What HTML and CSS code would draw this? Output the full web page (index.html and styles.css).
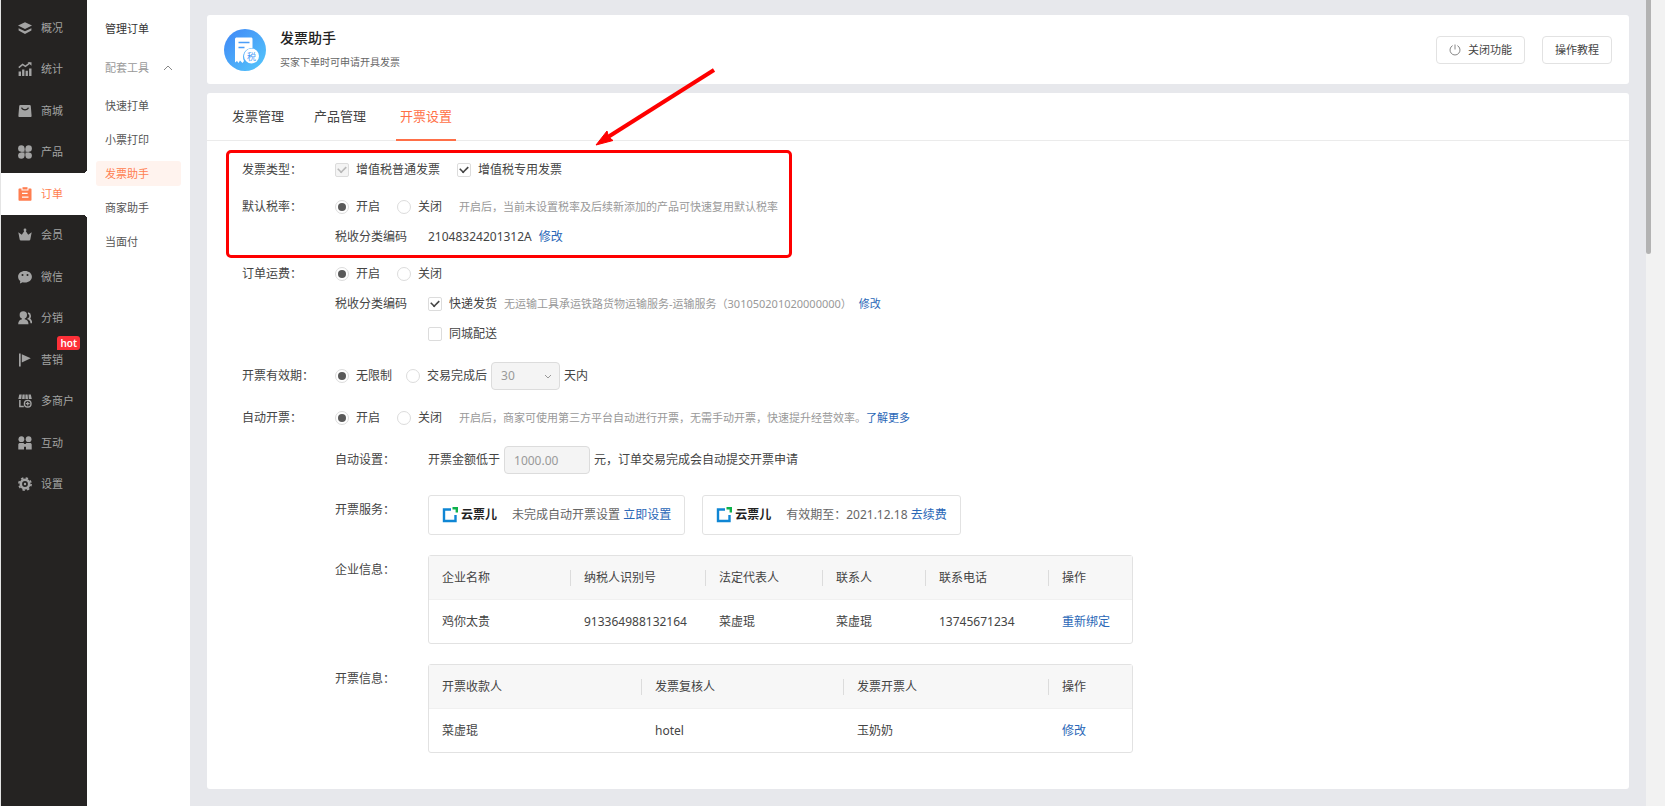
FILE: index.html
```html
<!DOCTYPE html>
<html lang="zh-CN">
<head>
<meta charset="utf-8">
<title>发票助手</title>
<link rel="stylesheet" href="styles.css">
</head>
<body>
<div class="app">
  <nav class="sidebar" aria-label="主菜单">
    <ul class="side-list">
      <li><a class="side-item" href="#"><svg class="side-icon" viewBox="0 0 14 14"><path d="M7 1.200 14 4.600 7 8 0 4.600z"/><path d="M.6 7.200 7 10.300l6.400-3.100v2.200L7 13 .6 9.400z"/></svg>概况</a></li>
      <li><a class="side-item" href="#"><svg class="side-icon" viewBox="0 0 14 14"><path d="M.8 5.600 4.600 2.400l2.800 1.900L12 .9" fill="none" stroke="currentColor" stroke-width="1.600"/><path d="M9.500.2H13.500v3.600zM.6 9.500h2.400V14H.6zM4.100 7.500h2.300V14H4.100zM7.600 8.700h2.300V14H7.600zM11.100 6.500h2.400V14h-2.400z"/></svg>统计</a></li>
      <li><a class="side-item" href="#"><svg class="side-icon" viewBox="0 0 14 14"><path fill-rule="evenodd" d="M2.300 1h9.400c.6 0 1 .4 1.100 1l.8 9.800c.1.800-.4 1.200-1.100 1.200h-11C.8 13 .3 12.600.4 11.800L1.200 2c.1-.6.500-1 1.100-1zM3 3.700C4.200 7.400 9.800 7.400 11 3.700l-1.200-.2C8.900 5.700 5.100 5.700 4.200 3.500z"/></svg>商城</a></li>
      <li><a class="side-item" href="#"><svg class="side-icon" viewBox="0 0 14 14"><circle cx="3.300" cy="3.500" r="3.200"/><circle cx="10.700" cy="3.500" r="3.200"/><circle cx="3.300" cy="10.600" r="3.200"/><circle cx="10.700" cy="10.600" r="3.200"/><path d="M3.300 3.500h3.200v3.200H3.300zM7.500 3.500h3.200v3.200H7.500zM3.300 7.500h3.200v3.100H3.300zM7.500 7.500h3.200v3.100H7.500z"/></svg>产品</a></li>
      <li><a class="side-item active" href="#" aria-current="page"><svg class="side-icon" viewBox="0 0 14 14"><path fill-rule="evenodd" d="M1.500 1.600h2v1.900h7V1.600h2c.6 0 1 .4 1 1v10.200c0 .6-.4 1-1 1h-11c-.6 0-1-.4-1-1V2.600c0-.6.400-1 1-1zM4 5.700v1.200h5.600V5.700zM4 9.500v1.200h6.500V9.500z"/><path d="M4.500.2h5v2.300h-5z"/></svg>订单</a></li>
      <li><a class="side-item" href="#"><svg class="side-icon" viewBox="0 0 14 14"><circle cx="7" cy="1.900" r="1.400"/><path d="M.3 4.200 3.800 6.800 6.300 3h1.400l2.500 3.800 3.500-2.600-1.400 7.300c-.1.700-.5 1-1.200 1H2.900c-.7 0-1.100-.3-1.200-1z"/></svg>会员</a></li>
      <li><a class="side-item" href="#"><svg class="side-icon" viewBox="0 0 14 14"><path fill-rule="evenodd" d="M7 1c3.900 0 6.900 2.400 6.900 5.800s-3 5.800-6.900 5.800c-.8 0-1.600-.1-2.300-.3L1.900 13.500l.4-2.400C.9 10 .1 8.500.1 6.800.1 3.400 3.100 1 7 1zM4.500 3.900a1 1 0 1 0 0 2 1 1 0 0 0 0-2zm5 0a1 1 0 1 0 0 2 1 1 0 0 0 0-2z"/></svg>微信</a></li>
      <li><a class="side-item" href="#"><svg class="side-icon" viewBox="0 0 14 14"><circle cx="5.300" cy="4" r="3.700"/><path d="M4 6h2.700v2.300c2.300.4 3.800 1.800 3.800 4.900H.2c0-3.100 1.500-4.500 3.800-4.900z"/><path d="M10 2.200c2.700.6 2.800 4.300.7 5.600 1.800.8 2.700 2.300 2.700 4.400" fill="none" stroke="currentColor" stroke-width="1.700"/></svg>分销</a></li>
      <li><a class="side-item" href="#"><svg class="side-icon" viewBox="0 0 14 14"><path d="M1 .5h1.700v13H1zM3.800 1.200 12.800 5.300 3.800 9.500z"/></svg>营销<span class="badge">hot</span></a></li>
      <li><a class="side-item" href="#"><svg class="side-icon" viewBox="0 0 14 14"><path d="M1.300.4h2.400L3.300 5H.3zM4.500.4h2.200V5H4.100zM7.400.4h2.200L10 5H7.400zM10.500.4h2.300L13.800 5h-3zM1.100 5.900h1.500v5.900h3.200v1.500H1.100z"/><circle cx="9.700" cy="9.700" r="3.300" fill="none" stroke="currentColor" stroke-width="1.400"/><path d="M9.100 7.800h1.200v1.300h1.300v1.200h-1.300v1.300H9.100v-1.300H7.800V9.100h1.300z"/></svg>多商户</a></li>
      <li><a class="side-item" href="#"><svg class="side-icon" viewBox="0 0 14 14"><circle cx="3.400" cy="3.200" r="2.900"/><circle cx="10.600" cy="3.200" r="2.900"/><path d="M2 6.900h3c.7 0 1.200.4 1.300 1.200h1.400c.1-.8.600-1.200 1.300-1.200h3c1 0 1.700.7 1.700 1.700v5H8v-2.800H6v2.800H.3v-5c0-1 .7-1.700 1.700-1.700z"/></svg>互动</a></li>
      <li><a class="side-item" href="#"><svg class="side-icon" viewBox="0 0 14 14"><circle cx="7" cy="7" r="4.200" fill="none" stroke="currentColor" stroke-width="2.600"/><circle cx="7" cy="7" r="6.100" fill="none" stroke="currentColor" stroke-width="1.600" stroke-dasharray="2.400 2.390"/><circle cx="7" cy="7" r="1.200"/></svg>设置</a></li>
    </ul>
  </nav>

  <nav class="submenu" aria-label="订单菜单">
    <a class="sub-link strong" href="#">管理订单</a>
    <button class="sub-group" type="button" aria-expanded="true">配套工具<svg class="sub-chevron" viewBox="0 0 10 6"><path d="M1 5 5 1l4 4"/></svg></button>
    <a class="sub-link" href="#">快速打单</a>
    <a class="sub-link" href="#">小票打印</a>
    <a class="sub-link current" href="#" aria-current="page">发票助手</a>
    <a class="sub-link" href="#">商家助手</a>
    <a class="sub-link" href="#">当面付</a>
  </nav>

  <main class="main">
    <header class="card head">
      <svg class="head-icon" viewBox="0 0 42 42" aria-hidden="true">
        <defs><linearGradient id="disc" x1="0" y1="0" x2="1" y2="1"><stop offset="0" stop-color="#3f86f6"/><stop offset="1" stop-color="#55c8fb"/></linearGradient></defs>
        <circle cx="21" cy="21" r="21" fill="url(#disc)"/>
        <path d="M13 8.500h14c1 0 1.500.6 1.500 1.500v9a9 9 0 0 0-8.500 13l-1.500 2-2.500-2.500-1.500 2.500-1.500-2-2 1.500V10c0-.9.600-1.500 2-1.500z" fill="#fff"/>
        <path d="M14.500 13.500h11M14.500 18.500h6" stroke="#4a9df8" stroke-width="1.500"/>
        <circle cx="27.500" cy="27" r="7.500" fill="#fff"/>
        <text x="27.500" y="30.500" class="head-glyph">税</text>
      </svg>
      <div class="head-text">
        <h1 class="head-title">发票助手</h1>
        <p class="head-sub">买家下单时可申请开具发票</p>
      </div>
      <div class="head-actions">
        <button class="btn" type="button"><svg class="power" viewBox="0 0 12 12"><path d="M6 .5v5M3.600 1.600a5 5 0 1 0 4.800 0"/></svg>关闭功能</button>
        <button class="btn" type="button">操作教程</button>
      </div>
    </header>

    <section class="card panel">
      <nav class="tabs" aria-label="发票">
        <a class="tab" href="#">发票管理</a>
        <a class="tab" href="#">产品管理</a>
        <a class="tab selected" href="#" aria-current="page">开票设置</a>
      </nav>

      <form class="form">
        <div class="row">
          <span class="label">发票类型：</span>
          <div class="line">
            <label class="choice"><input type="checkbox" checked disabled>增值税普通发票</label>
            <label class="choice"><input type="checkbox" checked>增值税专用发票</label>
          </div>
        </div>

        <div class="row">
          <span class="label">默认税率：</span>
          <div class="stack">
            <div class="line">
              <label class="choice"><input type="radio" name="rate" checked>开启</label>
              <label class="choice"><input type="radio" name="rate">关闭</label>
              <span class="hint">开启后，当前未设置税率及后续新添加的产品可快速复用默认税率</span>
            </div>
            <div class="sub">
              <span class="label">税收分类编码</span>
              <div class="line tight"><span>21048324201312A</span><a href="#">修改</a></div>
            </div>
          </div>
        </div>

        <div class="row roomy">
          <span class="label">订单运费：</span>
          <div class="stack">
            <div class="line">
              <label class="choice"><input type="radio" name="freight" checked>开启</label>
              <label class="choice"><input type="radio" name="freight">关闭</label>
            </div>
            <div class="sub">
              <span class="label">税收分类编码</span>
              <div class="stack">
                <div class="line tight">
                  <label class="choice"><input type="checkbox" checked>快递发货</label>
                  <span class="hint">无运输工具承运铁路货物运输服务-运输服务（301050201020000000）</span>
                  <a class="small" href="#">修改</a>
                </div>
                <div class="line"><label class="choice"><input type="checkbox">同城配送</label></div>
              </div>
            </div>
          </div>
        </div>

        <div class="row roomy">
          <span class="label">开票有效期：</span>
          <div class="line close">
            <label class="choice"><input type="radio" name="valid" checked>无限制</label>
            <div class="inline">
              <label class="choice"><input type="radio" name="valid">交易完成后</label>
              <span class="select"><select aria-label="天数" disabled><option>30</option></select><svg class="select-arrow" viewBox="0 0 8 5"><path d="M1 1l3 3 3-3"/></svg></span>
              <span>天内</span>
            </div>
          </div>
        </div>

        <div class="row">
          <span class="label">自动开票：</span>
          <div class="stack">
            <div class="line">
              <label class="choice"><input type="radio" name="auto" checked>开启</label>
              <label class="choice"><input type="radio" name="auto">关闭</label>
              <span class="hint">开启后，商家可使用第三方平台自动进行开票，无需手动开票，快速提升经营效率。<a class="small" href="#">了解更多</a></span>
            </div>

            <div class="sub auto">
              <label class="label" for="amount">自动设置：</label>
              <div class="inline">
                <span>开票金额低于</span>
                <input class="text" id="amount" type="text" value="1000.00" disabled>
                <span>元，订单交易完成会自动提交开票申请</span>
              </div>
            </div>

            <div class="sub block">
              <span class="label">开票服务：</span>
              <div class="services">
                <div class="service">
                  <span class="brand"><svg class="brand-icon" viewBox="0 0 16 16"><path d="M9 2.500H2v11.500h11.500V8" fill="none" stroke="#0f86d4" stroke-width="2.400"/><path d="M10.500 0H16v5.500h-2.400V2.400h-3.100z" fill="#0db14b"/></svg>云票儿</span>
                  <span>未完成自动开票设置 <a href="#">立即设置</a></span>
                </div>
                <div class="service">
                  <span class="brand"><svg class="brand-icon" viewBox="0 0 16 16"><path d="M9 2.500H2v11.500h11.500V8" fill="none" stroke="#0f86d4" stroke-width="2.400"/><path d="M10.500 0H16v5.500h-2.400V2.400h-3.100z" fill="#0db14b"/></svg>云票儿</span>
                  <span>有效期至：2021.12.18 <a href="#">去续费</a></span>
                </div>
              </div>
            </div>

            <div class="sub block">
              <span class="label">企业信息：</span>
              <table class="grid company">
                <thead><tr><th>企业名称</th><th>纳税人识别号</th><th>法定代表人</th><th>联系人</th><th>联系电话</th><th>操作</th></tr></thead>
                <tbody><tr><td>鸡你太贵</td><td>913364988132164</td><td>菜虚琨</td><td>菜虚琨</td><td>13745671234</td><td><a href="#">重新绑定</a></td></tr></tbody>
              </table>
            </div>

            <div class="sub block">
              <span class="label">开票信息：</span>
              <table class="grid issuer">
                <thead><tr><th>开票收款人</th><th>发票复核人</th><th>发票开票人</th><th>操作</th></tr></thead>
                <tbody><tr><td>菜虚琨</td><td>hotel</td><td>玉奶奶</td><td><a href="#">修改</a></td></tr></tbody>
              </table>
            </div>
          </div>
        </div>
      </form>

      <div class="callout"></div>
      <svg class="arrow" viewBox="0 0 126 82" aria-hidden="true"><path d="M120 4 14 71" stroke="#fe0000" stroke-width="4"/><path d="M2 79 13 65 14.500 71 19 74.500z" fill="#fe0000" stroke="#fe0000" stroke-width="1"/></svg>
    </section>
  </main>
  <div class="scroll"><div class="thumb"></div></div>
</div>
</body>
</html>
```
FILE: styles.css
```css
* { box-sizing: border-box; }

body {
  margin: 0;
  font: 12px/30px "Noto Sans", "Noto Sans CJK SC", sans-serif;
  color: #444;
  background: #e7e8ec;
}

a { color: #2a67b7; text-decoration: none; }
button, input, select { font: inherit; color: inherit; }

.app { display: flex; min-height: 100vh; }

/* Primary navigation */
.sidebar {
  flex: none;
  width: 87px;
  padding-top: 7px;
  background: #252322;
  border-left: 1px solid #e4e4e4;
}
.side-list {
  display: grid;
  grid-template-rows: repeat(12, 1fr);
  height: 498px;
  margin: 0;
  padding: 0;
  list-style: none;
}
.side-item {
  position: relative;
  display: flex;
  align-items: center;
  gap: 9px;
  height: 100%;
  padding-left: 17px;
  font-size: 11px;
  color: #a3a3a3;
}
.side-icon { width: 14px; height: 14px; fill: currentColor; }
.side-item.active { color: #ff7e50; background: #fff; }
.side-item.active::before,
.side-item.active::after {
  content: "";
  position: absolute;
  right: 0;
  width: 4px;
  height: 4px;
}
.side-item.active::before {
  top: -4px;
  background: radial-gradient(circle at 0 0, #252322 4px, #fff 4px);
}
.side-item.active::after {
  bottom: -4px;
  background: radial-gradient(circle at 0 100%, #252322 4px, #fff 4px);
}
.badge {
  position: absolute;
  top: -3px;
  right: 7px;
  padding: 0 3px;
  border-radius: 3px 3px 3px 0;
  font-size: 10px;
  font-weight: 600;
  line-height: 14px;
  color: #fff;
  background: #fd3038;
}

/* Secondary navigation */
.submenu {
  flex: none;
  display: flex;
  flex-direction: column;
  gap: 9px;
  width: 103px;
  padding: 16px 9px;
  background: #fff;
}
.sub-link, .sub-group {
  padding: 0 9px;
  font-size: 11px;
  line-height: 25px;
  color: #555;
}
.sub-link.strong { margin-bottom: 5px; color: #333; }
.sub-link.current { color: #ff7e50; background: #fff3ee; border-radius: 3px; }
.sub-group {
  display: flex;
  align-items: center;
  justify-content: space-between;
  margin-bottom: 4px;
  padding-right: 8px;
  border: 0;
  text-align: left;
  color: #999;
  background: none;
}
.sub-chevron { width: 10px; height: 6px; fill: none; stroke: #888; }

/* Page */
.main {
  flex: 1;
  display: flex;
  flex-direction: column;
  gap: 9px;
  min-width: 0;
  padding: 15px 17px 17px;
}
.card { background: #fff; border-radius: 3px; }

.head {
  display: flex;
  align-items: center;
  padding: 12px 17px;
}
.head-icon { width: 42px; height: 42px; }
.head-glyph {
  font-family: "Noto Sans CJK SC", sans-serif;
  font-size: 9px;
  text-anchor: middle;
  fill: #4a9df8;
}
.head-text { flex: 1; padding-left: 14px; }
.head-title { margin: 0 0 3px; font-size: 14px; font-weight: 500; line-height: 22px; color: #222; }
.head-sub { margin: 0; font-size: 10px; line-height: 20px; color: #666; }
.head-actions { display: flex; gap: 17px; }
.btn {
  display: flex;
  align-items: center;
  gap: 7px;
  height: 28px;
  padding: 0 12px;
  border: 1px solid #e2e2e2;
  border-radius: 4px;
  font-size: 11px;
  color: #444;
  background: #fff;
}
.power { width: 12px; height: 12px; fill: none; stroke: #888; }

.panel { position: relative; flex: 1; }
.tabs {
  display: flex;
  gap: 30px;
  padding: 0 25px;
  border-bottom: 1px solid #ebebeb;
}
.tab { font-size: 13px; line-height: 46px; color: #444; }
.tab.selected {
  margin-bottom: -1px;
  padding: 0 4px;
  color: #ff6f47;
  border-bottom: 2px solid #ff6f47;
}

/* Settings form */
.form {
  display: flex;
  flex-direction: column;
  gap: 7px;
  padding: 14px 35px 35px;
}
.row, .sub { display: flex; align-items: flex-start; }
.row.roomy { margin-bottom: 5px; }
.label { flex: none; width: 93px; }
.stack { flex: 1; min-width: 0; }
.line { display: flex; align-items: center; gap: 17px; min-height: 30px; }
.line.close { gap: 14px; }
.line.tight { gap: 7px; }
.inline { display: flex; align-items: center; gap: 4px; min-height: 30px; }
.choice { display: flex; align-items: center; gap: 7px; }
.hint { font-size: 11px; color: #999; }
.small { font-size: 11px; }
.sub.auto { margin-top: 12px; }
.sub.block { margin-top: 20px; }

input[type="checkbox"], input[type="radio"] {
  appearance: none;
  display: grid;
  place-content: center;
  width: 14px;
  height: 14px;
  margin: 0;
  border: 1px solid #dcdcdc;
  background: #fff;
}
input[type="checkbox"] { border-radius: 2px; }
input[type="radio"] { border-radius: 50%; }
input[type="radio"]:checked::before {
  content: "";
  width: 8px;
  height: 8px;
  border-radius: 50%;
  background: #5a5a5a;
}
input[type="checkbox"]:checked::before {
  content: "";
  width: 8px;
  height: 5px;
  margin-bottom: 3px;
  border: solid #444;
  border-width: 0 0 2px 2px;
  transform: rotate(-45deg) scale(0.8);
}
input[type="checkbox"]:disabled { background: #f4f4f4; }
input[type="checkbox"]:disabled::before { border-color: #b8b8b8; }

.select { position: relative; display: flex; }
.select select, .text {
  appearance: none;
  height: 28px;
  margin: 0;
  padding: 0 9px;
  border: 1px solid #dcdcdc;
  border-radius: 4px;
  line-height: 26px;
  color: #999;
  opacity: 1;
  background: #f4f4f4;
}
.select select { width: 69px; }
.text { width: 86px; }
.select-arrow {
  position: absolute;
  top: 12px;
  right: 8px;
  width: 8px;
  height: 5px;
  fill: none;
  stroke: #999;
}

.services { display: flex; gap: 17px; }
.service {
  display: flex;
  align-items: center;
  gap: 15px;
  height: 40px;
  padding: 0 13px;
  border: 1px solid #e2e2e2;
  border-radius: 3px;
  color: #666;
}
.brand {
  display: flex;
  align-items: center;
  gap: 3px;
  font-weight: 700;
  color: #222;
}
.brand-icon { width: 16px; height: 16px; }

.grid {
  flex: 1;
  max-width: 705px;
  border: 1px solid #e2e2e2;
  border-radius: 3px;
  border-spacing: 0;
  table-layout: fixed;
}
.grid th, .grid td { height: 43px; padding: 0 0 0 14px; text-align: left; font-weight: 400; }
.grid th { height: 44px; background: #f7f7f7 no-repeat 0 14px / 1px 16px; border-bottom: 1px solid #f0f0f0; }
.grid th:first-child, .grid td:first-child { padding-left: 13px; }
.grid th + th { background-image: linear-gradient(#dcdcdc, #dcdcdc); }
.company th:nth-child(1) { width: 141px; }
.company th:nth-child(2) { width: 135px; }
.company th:nth-child(3) { width: 117px; }
.company th:nth-child(4) { width: 103px; }
.company th:nth-child(5) { width: 123px; }
.issuer th:nth-child(1) { width: 212px; }
.issuer th:nth-child(2) { width: 202px; }
.issuer th:nth-child(3) { width: 205px; }

/* Annotation over the form */
.callout {
  position: absolute;
  top: 57px;
  left: 19px;
  width: 566px;
  height: 108px;
  border: 3px solid #fe0000;
  border-radius: 5px;
  pointer-events: none;
}
.arrow {
  position: absolute;
  top: -27px;
  left: 387px;
  width: 126px;
  height: 82px;
  fill: none;
}

.scroll { flex: none; width: 19px; background: #f2f2f2; }
.thumb { width: 5px; height: 254px; border-radius: 0 0 3px 3px; background: #b3b3b3; }
```
